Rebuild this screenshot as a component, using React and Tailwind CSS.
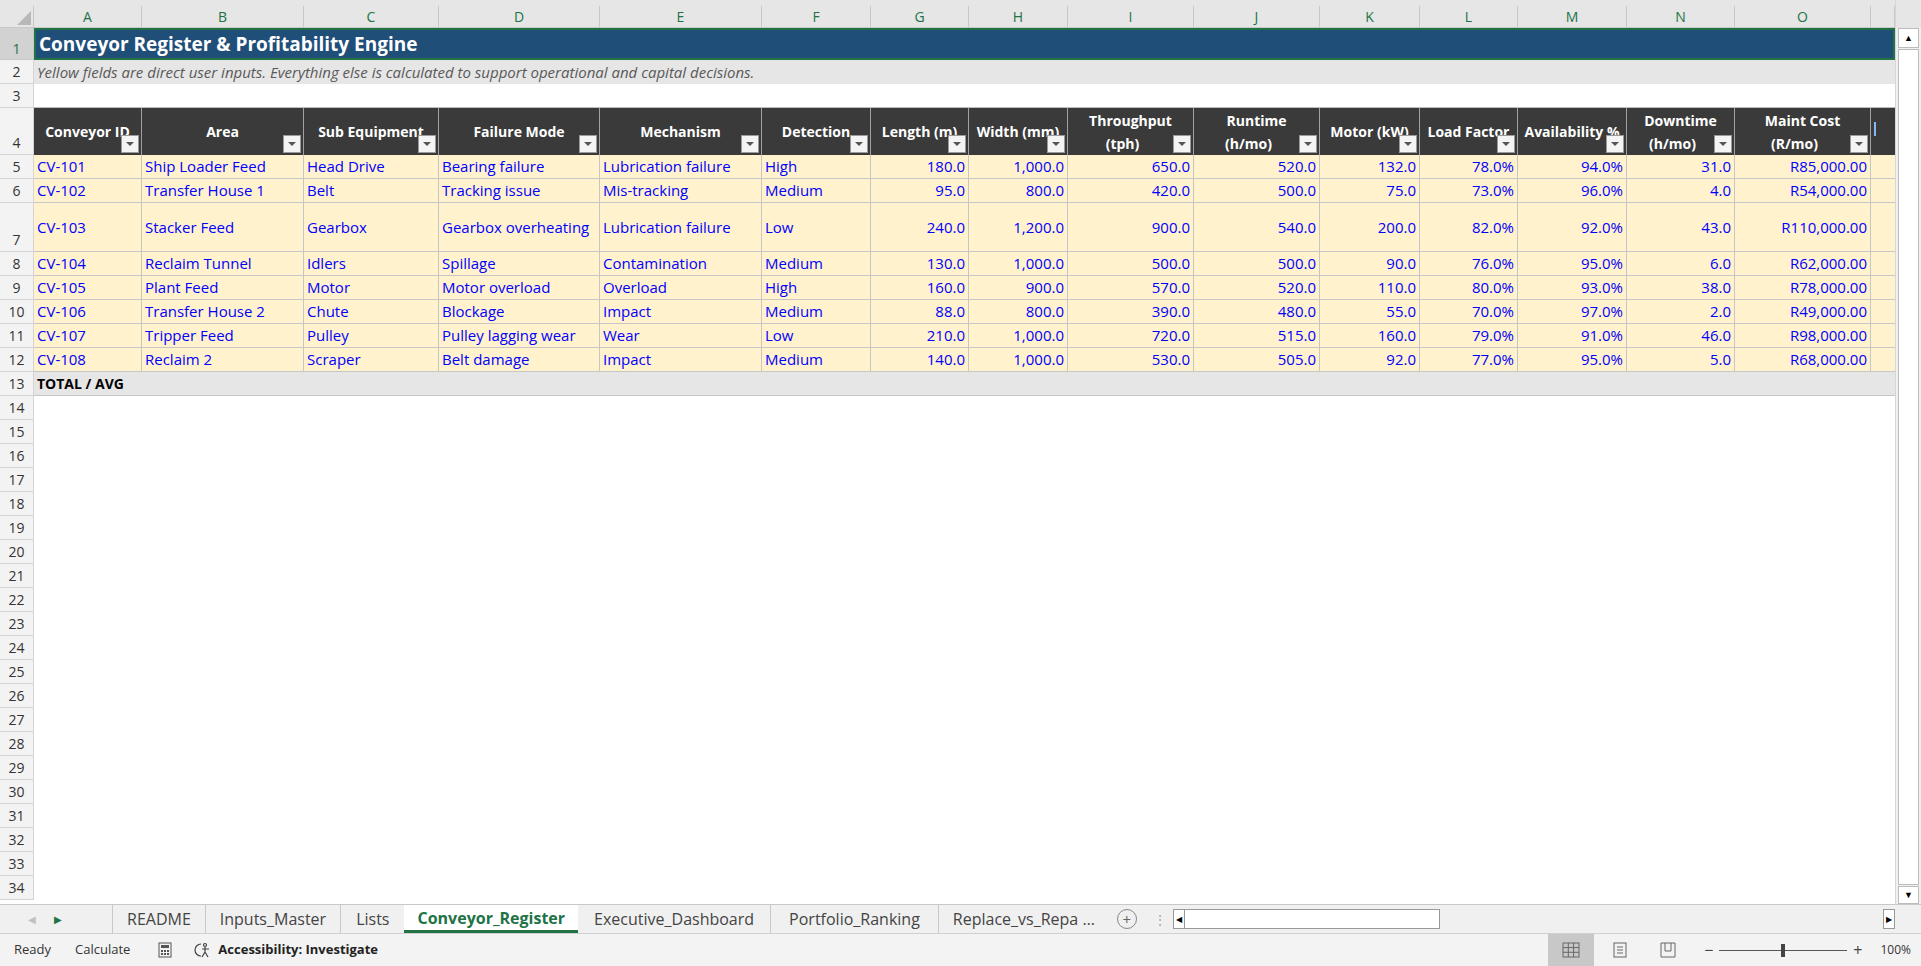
import React from "react";

const W = ["w-[108px]","w-[162px]","w-[135px]","w-[161px]","w-[162px]","w-[109px]","w-[98px]","w-[99px]","w-[126px]","w-[126px]","w-[100px]","w-[98px]","w-[109px]","w-[108px]","w-[136px]","w-[24px]"];
const LETTERS = ["A","B","C","D","E","F","G","H","I","J","K","L","M","N","O",""];
const HEAD = [["Conveyor ID"],["Area"],["Sub Equipment"],["Failure Mode"],["Mechanism"],["Detection"],["Length (m)"],["Width (mm)"],["Throughput","(tph)"],["Runtime","(h/mo)"],["Motor (kW)"],["Load Factor"],["Availability %"],["Downtime","(h/mo)"],["Maint Cost","(R/mo)"]];
const DATA = [
  ["CV-101","Ship Loader Feed","Head Drive","Bearing failure","Lubrication failure","High","180.0","1,000.0","650.0","520.0","132.0","78.0%","94.0%","31.0","R85,000.00"],
  ["CV-102","Transfer House 1","Belt","Tracking issue","Mis-tracking","Medium","95.0","800.0","420.0","500.0","75.0","73.0%","96.0%","4.0","R54,000.00"],
  ["CV-103","Stacker Feed","Gearbox","Gearbox overheating","Lubrication failure","Low","240.0","1,200.0","900.0","540.0","200.0","82.0%","92.0%","43.0","R110,000.00"],
  ["CV-104","Reclaim Tunnel","Idlers","Spillage","Contamination","Medium","130.0","1,000.0","500.0","500.0","90.0","76.0%","95.0%","6.0","R62,000.00"],
  ["CV-105","Plant Feed","Motor","Motor overload","Overload","High","160.0","900.0","570.0","520.0","110.0","80.0%","93.0%","38.0","R78,000.00"],
  ["CV-106","Transfer House 2","Chute","Blockage","Impact","Medium","88.0","800.0","390.0","480.0","55.0","70.0%","97.0%","2.0","R49,000.00"],
  ["CV-107","Tripper Feed","Pulley","Pulley lagging wear","Wear","Low","210.0","1,000.0","720.0","515.0","160.0","79.0%","91.0%","46.0","R98,000.00"],
  ["CV-108","Reclaim 2","Scraper","Belt damage","Impact","Medium","140.0","1,000.0","530.0","505.0","92.0","77.0%","95.0%","5.0","R68,000.00"],
];
const font = { fontFamily: "'Open Sans','Liberation Sans',sans-serif" };

function RowNum({ n, h }) {
  return <div className={`w-[34px] shrink-0 ${h} bg-[#f3f3f3] border-r border-b border-[#d4d4d4] flex items-end justify-center text-[14px] text-[#333] pb-[1px]`}>{n}</div>;
}

function Filter() {
  return <div className="absolute right-[2px] bottom-[2px] w-[18px] h-[18px] bg-[#f4f4f4] border border-[#9a9a9a] flex items-center justify-center"><div className="w-0 h-0 border-l-[4px] border-r-[4px] border-t-[4px] border-l-transparent border-r-transparent border-t-[#555]" /></div>;
}

export default function App() {
  const emptyRows = [];
  for (let i = 14; i <= 34; i++) emptyRows.push(i);
  return (
    <div className="w-[1921px] h-[966px] bg-white flex flex-col overflow-hidden text-[15px]" style={font}>
      <div className="flex flex-1 min-h-0">
        <div className="flex-1 flex flex-col overflow-hidden">
          <div className="h-[6px] bg-[#e6e6e6]" />
          <div className="flex h-[22px] shrink-0 bg-[#e6e6e6]">
            <div className="w-[34px] shrink-0 border-r border-b border-[#c8c8c8] relative"><svg className="absolute right-[2px] bottom-[2px]" width="14" height="14"><polygon points="14,0 14,14 0,14" fill="#b8b8b8"/></svg></div>
            {LETTERS.map((l, i) => <div key={i} className={`${W[i]} shrink-0 border-r border-b border-[#c8c8c8] flex items-center justify-center text-[#217346] text-[14px]`}>{l}</div>)}
          </div>
          <div className="flex h-[32px] shrink-0">
            <div className="w-[34px] shrink-0 bg-[#d2d2d2] border-r border-b border-[#c8c8c8] flex items-end justify-center text-[14px] text-[#217346]">1</div>
            <div className="flex-1 bg-[#1f4e79] border-2 border-[#217346] flex items-center pl-[3px] text-white font-bold text-[19px]">Conveyor Register &amp; Profitability Engine</div>
          </div>
          <div className="flex h-[24px] shrink-0">
            <RowNum n={2} h="h-[24px]" />
            <div className="flex-1 bg-[#e7e6e6] flex items-center pl-[3px] italic text-[#595959] text-[15px]">Yellow fields are direct user inputs. Everything else is calculated to support operational and capital decisions.</div>
          </div>
          <div className="flex h-[24px] shrink-0">
            <RowNum n={3} h="h-[24px]" />
            <div className="flex-1 border-b border-[#bcbcbc]" />
          </div>
          <div className="flex h-[47px] shrink-0">
            <RowNum n={4} h="h-[47px]" />
            {HEAD.map((h, i) => (
              <div key={i} className={`${W[i]} shrink-0 relative bg-[#3a3a3a] border-r border-[#a0a0a0] text-white font-bold text-[14px] flex flex-col items-center justify-center leading-[23px] overflow-hidden whitespace-nowrap`}>
                {h.map((t, j) => <div key={j} className={h.length === 1 ? "" : (j === 1 ? "pr-[16px]" : "")}>{t}</div>)}
                <Filter />
              </div>
            ))}
            <div className="w-[24px] shrink-0 bg-[#3a3a3a] relative"><div className="absolute left-[3px] top-[14px] w-[2px] h-[14px] bg-[#8ab4f8]" /></div>
            <div className="flex-1" />
          </div>
          {DATA.map((r, ri) => {
            const h = ri === 2 ? "h-[49px]" : "h-[24px]";
            return (
              <div key={ri} className={`flex ${h} shrink-0`}>
                <RowNum n={ri + 5} h={h} />
                {r.map((c, ci) => (
                  <div key={ci} className={`${W[ci]} shrink-0 bg-[#fff2cc] border-r border-b border-[#c6c6c6] text-[#0000ff] flex items-center px-[3px] whitespace-nowrap overflow-hidden ${ci >= 6 ? "justify-end" : ""}`}>{c}</div>
                ))}
                <div className="w-[24px] shrink-0 bg-[#fff2cc] border-b border-[#c6c6c6]" />
                <div className="flex-1" />
              </div>
            );
          })}
          <div className="flex h-[24px] shrink-0">
            <RowNum n={13} h="h-[24px]" />
            <div className="flex-1 bg-[#e7e6e6] border-b border-[#c6c6c6] flex items-center pl-[3px] font-bold text-black text-[14px]">TOTAL / AVG</div>
          </div>
          {emptyRows.map(n => (
            <div key={n} className="flex h-[24px] shrink-0">
              <RowNum n={n} h="h-[24px]" />
              <div className="flex-1" />
            </div>
          ))}
        </div>
        <div className="w-[26px] shrink-0 bg-[#f0f0f0] flex flex-col border-l border-[#d6d6d6]">
          <div className="h-[28px] bg-[#e6e6e6]" />
          <div className="h-[20px] mx-[2px] bg-white border border-[#bcbcbc] flex items-center justify-center text-[9px] text-black">▲</div>
          <div className="flex-1 mx-[2px] bg-white border border-[#bcbcbc] my-[1px]" />
          <div className="h-[18px] mx-[2px] bg-white border border-[#bcbcbc] flex items-center justify-center text-[9px] text-black">▼</div>
        </div>
      </div>
      <div className="h-[29px] shrink-0 bg-[#f0f0f0] border-t border-[#c8c8c8] flex items-stretch text-[16px] text-[#444]">
        <div className="w-[112px] flex items-center gap-[18px] pl-[28px] text-[10px]"><span className="text-[#c0c0c0]">◀</span><span className="text-[#217346]">▶</span></div>
        <div className="px-[14px] border-l border-[#c8c8c8] flex items-center">README</div>
        <div className="px-[14px] border-l border-[#c8c8c8] flex items-center">Inputs_Master</div>
        <div className="px-[15px] border-l border-[#c8c8c8] flex items-center">Lists</div>
        <div className="px-[13px] bg-white border-b-[3px] border-[#217346] text-[#217346] font-bold flex items-center">Conveyor_Register</div>
        <div className="px-[16px] border-r border-[#c8c8c8] flex items-center">Executive_Dashboard</div>
        <div className="px-[18px] border-r border-[#c8c8c8] flex items-center">Portfolio_Ranking</div>
        <div className="w-[168px] pl-[14px] flex items-center whitespace-nowrap overflow-hidden">Replace_vs_Repa …</div>
        <div className="w-[40px] flex items-center justify-center">
          <div className="w-[20px] h-[20px] rounded-full border border-[#888] flex items-center justify-center text-[#666] text-[15px] leading-none">+</div>
        </div>
        <div className="w-[26px] flex items-center justify-center text-[#aaa] text-[14px]">⋮</div>
        <div className="w-[470px] my-[4px] flex">
          <div className="w-[12px] bg-white border border-[#999] flex items-center justify-center text-[8px] text-black">◀</div>
          <div className="w-[255px] bg-white border-y border-r border-[#999]" />
        </div>
        <div className="flex-1" />
        <div className="w-[12px] my-[4px] bg-white border border-[#999] flex items-center justify-center text-[8px] text-black mr-[26px]">▶</div>
      </div>
      <div className="h-[33px] shrink-0 bg-[#f3f3f3] border-t border-[#d0d0d0] flex items-center text-[13px] text-[#333]">
        <span className="ml-[14px]">Ready</span>
        <span className="ml-[24px]">Calculate</span>
        <svg className="ml-[28px]" width="14" height="16" viewBox="0 0 14 16"><rect x="1" y="1" width="12" height="14" fill="none" stroke="#555"/><rect x="3" y="3" width="8" height="3" fill="#555"/><g fill="#555"><rect x="3" y="8" width="2" height="2"/><rect x="6" y="8" width="2" height="2"/><rect x="9" y="8" width="2" height="2"/><rect x="3" y="11" width="2" height="2"/><rect x="6" y="11" width="2" height="2"/><rect x="9" y="11" width="2" height="2"/></g></svg>
        <svg className="ml-[22px]" width="20" height="18" viewBox="0 0 20 18" fill="none" stroke="#444" strokeWidth="1.2"><path d="M7 3 A6 6 0 0 0 7 15"/><circle cx="11" cy="4" r="1.5"/><path d="M8 8h7M11 6v5l-3 5M11 11l3 5"/></svg>
        <span className="ml-[4px] font-bold text-[#222]">Accessibility: Investigate</span>
        <div className="flex-1" />
        <div className="w-[46px] h-full bg-[#c8c8c8] flex items-center justify-center">
          <svg width="18" height="16" viewBox="0 0 18 16" fill="none" stroke="#666"><rect x="1" y="1" width="16" height="14"/><path d="M6.3 1v14M11.6 1v14M1 5.6h16M1 10.3h16"/></svg>
        </div>
        <div className="w-[52px] flex items-center justify-center"><svg width="14" height="16" viewBox="0 0 14 16" fill="none" stroke="#666"><rect x="1" y="1" width="12" height="14"/><path d="M4 5h6M4 8h6M4 11h6"/></svg></div>
        <div className="w-[44px] flex items-center justify-center"><svg width="16" height="16" viewBox="0 0 16 16" fill="none" stroke="#666"><path d="M1 1h14v14H1z M5 1v8h6V1"/></svg></div>
        <span className="ml-[14px] text-[16px] text-[#444]">−</span>
        <div className="relative w-[128px] h-[1px] bg-[#555] mx-[6px]"><div className="absolute left-[62px] -top-[6px] w-[4px] h-[13px] bg-[#444]" /></div>
        <span className="text-[16px] text-[#444]">+</span>
        <span className="ml-[18px] mr-[10px] text-[12px]">100%</span>
      </div>
    </div>
  );
}
